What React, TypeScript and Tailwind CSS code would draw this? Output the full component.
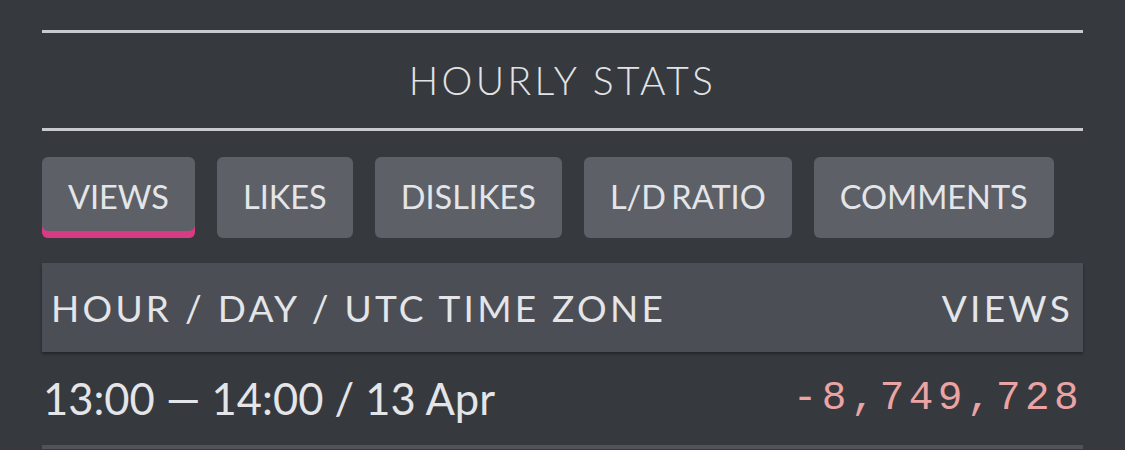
const tabs = ['VIEWS', 'LIKES', 'DISLIKES', 'L/D RATIO', 'COMMENTS'];

function Tab({ label, active }: { label: string; active?: boolean }) {
  return (
    <div
      className={`h-[81px] px-[26px] flex items-center rounded-[6px] bg-[#5d6067] text-[#e4e5e8] text-[32.5px] [word-spacing:-3px] ${
        active ? 'shadow-[inset_0_-7px_0_#d93b82]' : ''
      }`}
    >
      {label}
    </div>
  );
}

export default function App() {
  return (
    <div
      className="w-[1125px] h-[450px] overflow-hidden bg-[#36393e] px-[42px] pt-[30px]"
      style={{ fontFamily: 'Lato, "Open Sans", sans-serif' }}
    >
      {/* Section title */}
      <div className="border-t-[3px] border-b-[3px] border-[#c8cad0] h-[101px] flex items-center justify-center">
        <h2 className="text-[39px] font-light tracking-[0.085em] text-[#e2e3e6] leading-none">HOURLY STATS</h2>
      </div>

      {/* Metric tabs */}
      <div className="flex gap-[22px] mt-[26px]">
        {tabs.map((t, i) => (
          <Tab key={t} label={t} active={i === 0} />
        ))}
      </div>

      {/* Table */}
      <div className="mt-[25px]">
        <div className="h-[89px] bg-[#4b4e54] flex items-center justify-between pl-[9px] pr-[10px] text-[37px] tracking-[0.088em] text-[#e4e5e8] shadow-[0_2px_3px_rgba(0,0,0,0.35)] relative">
          <span>HOUR / DAY / UTC TIME ZONE</span>
          <span>VIEWS</span>
        </div>
        <div className="h-[97px] flex items-center justify-between pl-[1px] pr-0 border-b-[4px] border-[#505359]">
          <span className="text-[43.5px] text-[#e4e5e8]">13:00 — 14:00 / 13 Apr</span>
          <span
            className="text-[41px] tracking-[0.108em] text-[#eba3a3]"
            style={{ fontFamily: '"Liberation Mono", "DejaVu Sans Mono", monospace' }}
          >
            -8,749,728
          </span>
        </div>
      </div>
    </div>
  );
}
